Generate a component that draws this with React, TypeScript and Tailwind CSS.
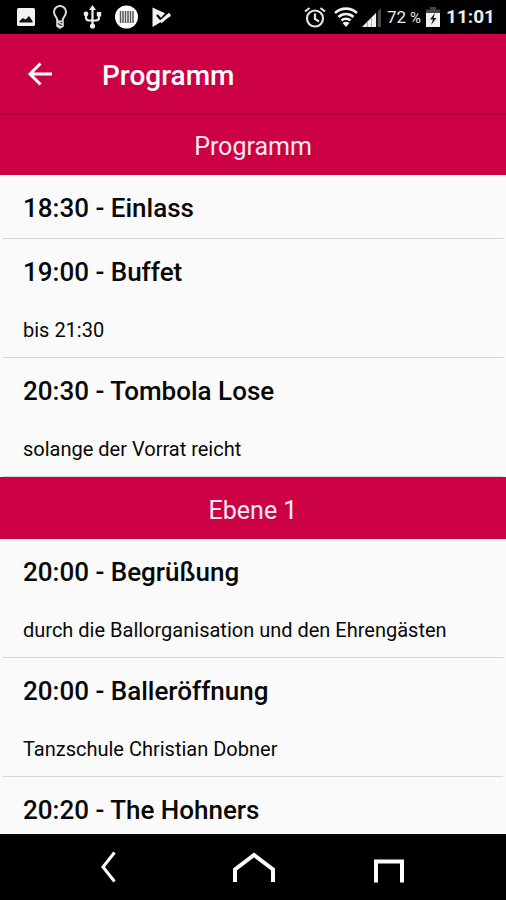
import React from "react";

interface ProgramItem {
  time: string;
  title: string;
  note?: string;
}

interface ProgramSection {
  name: string;
  items: ProgramItem[];
}

const sections: ProgramSection[] = [
  {
    name: "Programm",
    items: [
      { time: "18:30", title: "Einlass" },
      { time: "19:00", title: "Buffet", note: "bis 21:30" },
      { time: "20:30", title: "Tombola Lose", note: "solange der Vorrat reicht" },
    ],
  },
  {
    name: "Ebene 1",
    items: [
      {
        time: "20:00",
        title: "Begrüßung",
        note: "durch die Ballorganisation und den Ehrengästen",
      },
      { time: "20:00", title: "Balleröffnung", note: "Tanzschule Christian Dobner" },
      { time: "20:20", title: "The Hohners" },
    ],
  },
];

function StatusBar() {
  return (
    <div className="flex h-[34px] shrink-0 items-center justify-between bg-black pl-4 pr-[11px] text-[#ececec]">
      <div className="flex items-center gap-[14px]" aria-hidden="true">
        {/* picture */}
        <svg className="h-5 w-5" viewBox="0 0 20 20">
          <rect x="1" y="1" width="18" height="18" rx="1.500" fill="#f2f2f2" />
          <path d="M3.500 15.500V14L7 11l2.500 1.500 3.500-3.500 3.500 5v1.500z" fill="#111" />
        </svg>
        {/* light bulb */}
        <svg
          className="h-6 w-5"
          viewBox="0 0 20 24"
          fill="none"
          stroke="#dcdcdc"
          strokeWidth="2"
        >
          <path d="M7.500 16C7.500 12.500 4 11 4 7a6 6 0 0 1 12 0c0 4-3.500 5.500-3.500 9" />
          <path
            d="M7 16.500l6 3.500M7 19.500l4 2.500M7 16v5l3 2 3-2v-4.500z"
            strokeWidth="1.600"
          />
        </svg>
        {/* usb */}
        <svg
          className="-ml-1 -mr-1 h-6 w-6"
          viewBox="0 0 24 24"
          fill="none"
          stroke="#eee"
          strokeWidth="2.200"
        >
          <path d="M12.500 4v17M6 9v3.500q0 3 3 3h7q3 0 3-3V9" />
          <path d="M12.500 0l3.500 5H9z" fill="#eee" stroke="none" />
          <circle cx="12.500" cy="21" r="2.600" fill="#eee" stroke="none" />
          <circle cx="6" cy="9" r="2.400" fill="#eee" stroke="none" />
          <path d="M16.800 7h4.400v4.400h-4.400z" fill="#eee" stroke="none" />
        </svg>
        {/* barcode badge */}
        <svg className="h-6 w-6" viewBox="0 0 24 24">
          <circle cx="12.500" cy="12" r="11.500" fill="#fff" />
          <path
            d="M6.500 6v12M9 6v12M11.500 6v12M14 6v12M16.500 6v12M19 6v12"
            stroke="#555"
            strokeWidth="1.500"
          />
        </svg>
        {/* play store check */}
        <svg className="h-5 w-5" viewBox="0 0 20 20">
          <path d="M0.500 0.500L19 9 0.500 20z" fill="#f2f2f2" />
          <path d="M5 8l4 4.500L16.500 4" fill="none" stroke="#000" strokeWidth="2.200" />
          <path d="M8.500 15L18 7" fill="none" stroke="#f2f2f2" strokeWidth="3" />
        </svg>
      </div>
      <div className="flex items-center">
        {/* alarm */}
        <svg
          className="mr-2 h-[22px] w-[22px]"
          viewBox="0 0 22 22"
          fill="none"
          stroke="#e2e2e2"
          strokeWidth="2.200"
          aria-hidden="true"
        >
          <circle cx="11" cy="12.500" r="8" />
          <path d="M11 7.500V13l4 2.500M1 5.500L5.500 2M21 5.500L16.500 2" />
        </svg>
        {/* wifi */}
        <svg
          className="mr-1 h-[22px] w-6"
          viewBox="0 0 24 22"
          fill="none"
          stroke="#f2f2f2"
          strokeWidth="2.600"
          aria-hidden="true"
        >
          <path d="M1 7a16 16 0 0 1 22 0M4.500 11a11 11 0 0 1 15 0M7.500 14.500a6.500 6.500 0 0 1 9 0" />
          <path d="M12 21l-3.500-4q3.500-2.500 7 0z" fill="#f2f2f2" stroke="none" />
        </svg>
        {/* signal strength */}
        <svg className="mr-[5px] h-5 w-5" viewBox="0 0 20 20" aria-hidden="true">
          <path d="M0 20L19 1v19z" fill="#4a4a4a" />
          <path d="M0 20L14 6v14z" fill="#f2f2f2" />
          <path d="M5.500 14v6M9.500 10v10" stroke="#aaa" strokeWidth="1" />
          <path d="M15 3v17" stroke="#000" strokeWidth="1.500" />
        </svg>
        <span className="mr-1 flex items-baseline gap-1 text-[17px] leading-5">
          72 <span className="text-[15px]">%</span>
        </span>
        {/* battery */}
        <svg className="mr-[5px] h-[22px] w-4" viewBox="0 0 16 22" aria-hidden="true">
          <path d="M5 1h6v2.500h4V7H1V3.500h4z" fill="#444" />
          <path d="M1 7h14v14H1z" fill="#f2f2f2" />
          <path d="M10 7l-5 6.500h3L6 19l5.500-7H8.500z" fill="#111" />
        </svg>
        <span className="text-[19px] font-bold leading-6">11:01</span>
      </div>
    </div>
  );
}

function AppBar() {
  return (
    <header className="relative z-10 flex h-[79px] shrink-0 items-center bg-[#cc0044] pl-6 pt-1 text-white shadow-[0_2px_0_#ac003a]">
      <button type="button" aria-label="Zurück" className="mr-[46px] h-8 w-8">
        <svg
          className="h-8 w-8"
          viewBox="0 0 32 32"
          fill="none"
          stroke="currentColor"
          strokeWidth="3"
        >
          <path d="M28 14H6.500M16.500 3.500L6 14l10.500 10.500" />
        </svg>
      </button>
      <h1 className="text-[28px] font-medium leading-8">Programm</h1>
    </header>
  );
}

function SectionBlock({ section }: { section: ProgramSection }) {
  return (
    <section>
      <h2 className="flex h-[62px] items-center justify-center bg-[#cc0044] pt-[6px] text-[25px] leading-8 text-[#ffe9ef]">
        {section.name}
      </h2>
      <ul className="px-[3px]">
        {section.items.map((item) => (
          <li
            key={item.time + item.title}
            className="border-b border-[#d8d8d8] px-5 pb-[14px] pt-[17px]"
          >
            <h3 className="text-[26px] font-medium leading-8">
              {item.time} - {item.title}
            </h3>
            {item.note && (
              <p className="mb-px mt-[30px] text-[20px] leading-6">{item.note}</p>
            )}
          </li>
        ))}
      </ul>
    </section>
  );
}

function NavBar() {
  return (
    <nav className="flex h-[66px] shrink-0 items-center justify-between bg-black pl-[92px] pr-[99px] text-white">
      <button type="button" aria-label="Zurück" className="pr-3">
        <svg className="h-10 w-8" viewBox="0 0 32 40" fill="none" stroke="currentColor" strokeWidth="3">
          <path d="M22.500 5.500L11 20 22.500 34.500" />
        </svg>
      </button>
      <button type="button" aria-label="Startseite">
        <svg className="h-10 w-12" viewBox="0 0 48 40" fill="none" stroke="currentColor" strokeWidth="4">
          <path d="M5 35V22.500L24 8l19 14.500V35" />
        </svg>
      </button>
      <button type="button" aria-label="Letzte Apps">
        <svg className="h-10 w-9" viewBox="0 0 36 40" fill="none" stroke="currentColor" strokeWidth="4">
          <path d="M5 35.500V14.500h26v21" />
        </svg>
      </button>
    </nav>
  );
}

export default function App() {
  return (
    <div className="flex h-screen flex-col bg-[#fafafa] font-['Roboto',sans-serif] text-[#080808]">
      <StatusBar />
      <AppBar />
      <main className="min-h-0 flex-1 overflow-y-auto [scrollbar-width:none]">
        {sections.map((section) => (
          <SectionBlock key={section.name} section={section} />
        ))}
      </main>
      <NavBar />
    </div>
  );
}
